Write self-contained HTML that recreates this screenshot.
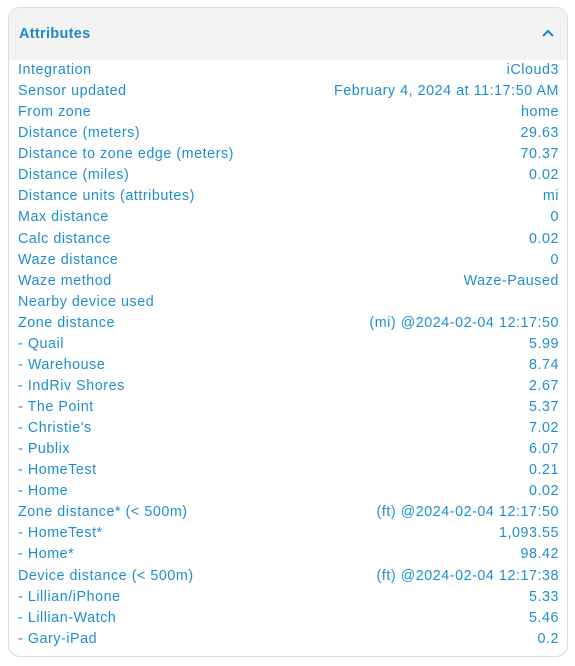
<!DOCTYPE html>
<html><head><meta charset="utf-8"><style>
body{margin:0;background:#fff;width:575px;height:666px;overflow:hidden;font-family:"Liberation Sans",Roboto,sans-serif;}
.card{position:absolute;left:8px;top:7px;width:560px;height:650px;border:1px solid #dcdcdc;border-radius:12px;overflow:hidden;box-sizing:border-box;}
.hdr{height:52px;background:#f3f3f3;position:relative;}
.hdr span{position:absolute;left:10px;top:18px;font-size:14.5px;font-weight:bold;color:#1f8bc6;letter-spacing:0.3px;}
.hdr svg{position:absolute;right:12px;top:20px;}
.rows{padding:0 8px 0 9px;color:#1e8ed0;font-size:14.3px;letter-spacing:0.55px;}
.r{display:flex;justify-content:space-between;height:21.07px;line-height:21.07px;white-space:nowrap;}
</style></head><body>
<div class="card">
<div class="hdr"><span>Attributes</span><svg width="14" height="10" viewBox="0 0 14 10"><path d="M2 8 L7 3 L12 8" fill="none" stroke="#1f8bc6" stroke-width="2.2"/></svg></div>
<div class="rows">
<div class="r"><span>Integration</span><span>iCloud3</span></div>
<div class="r"><span>Sensor updated</span><span>February 4, 2024 at 11:17:50 AM</span></div>
<div class="r"><span>From zone</span><span>home</span></div>
<div class="r"><span>Distance (meters)</span><span>29.63</span></div>
<div class="r"><span>Distance to zone edge (meters)</span><span>70.37</span></div>
<div class="r"><span>Distance (miles)</span><span>0.02</span></div>
<div class="r"><span>Distance units (attributes)</span><span>mi</span></div>
<div class="r"><span>Max distance</span><span>0</span></div>
<div class="r"><span>Calc distance</span><span>0.02</span></div>
<div class="r"><span>Waze distance</span><span>0</span></div>
<div class="r"><span>Waze method</span><span>Waze-Paused</span></div>
<div class="r"><span>Nearby device used</span><span></span></div>
<div class="r"><span>Zone distance</span><span>(mi) @2024-02-04 12:17:50</span></div>
<div class="r"><span>- Quail</span><span>5.99</span></div>
<div class="r"><span>- Warehouse</span><span>8.74</span></div>
<div class="r"><span>- IndRiv Shores</span><span>2.67</span></div>
<div class="r"><span>- The Point</span><span>5.37</span></div>
<div class="r"><span>- Christie's</span><span>7.02</span></div>
<div class="r"><span>- Publix</span><span>6.07</span></div>
<div class="r"><span>- HomeTest</span><span>0.21</span></div>
<div class="r"><span>- Home</span><span>0.02</span></div>
<div class="r"><span>Zone distance* (&lt; 500m)</span><span>(ft) @2024-02-04 12:17:50</span></div>
<div class="r"><span>- HomeTest*</span><span>1,093.55</span></div>
<div class="r"><span>- Home*</span><span>98.42</span></div>
<div class="r"><span>Device distance (&lt; 500m)</span><span>(ft) @2024-02-04 12:17:38</span></div>
<div class="r"><span>- Lillian/iPhone</span><span>5.33</span></div>
<div class="r"><span>- Lillian-Watch</span><span>5.46</span></div>
<div class="r"><span>- Gary-iPad</span><span>0.2</span></div>
</div></div>
</body></html>
